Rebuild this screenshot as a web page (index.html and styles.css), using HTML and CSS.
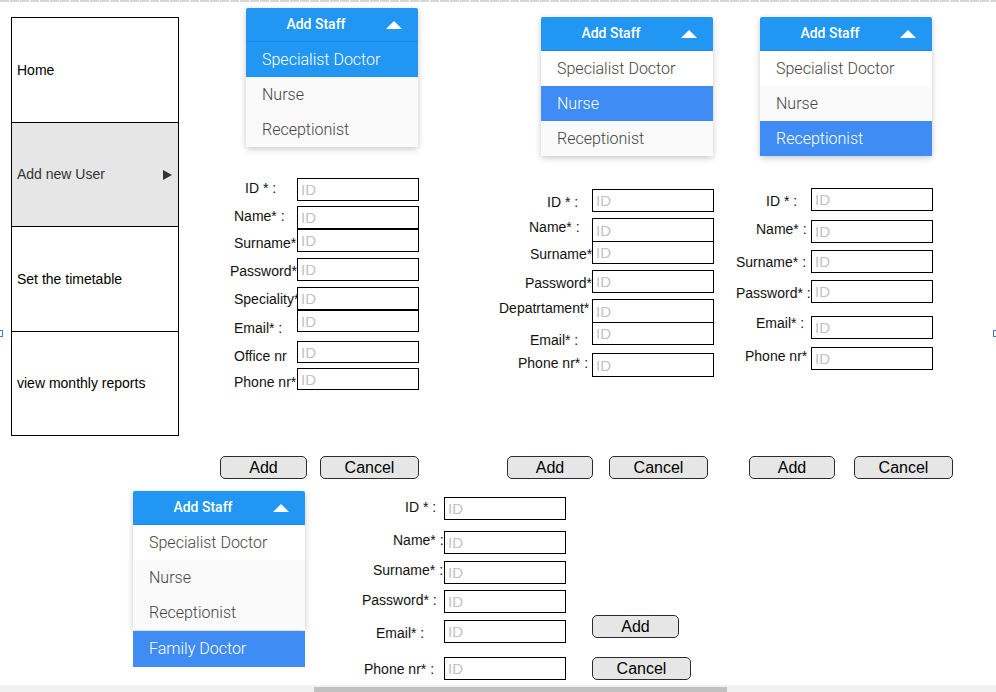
FILE: index.html
```html
<!DOCTYPE html>
<html>
<head>
<meta charset="utf-8">
<link rel="stylesheet" href="styles.css">
</head>
<body>
<div class="canvas">
  <div class="ruler"></div>
  <div class="handle handle-l"></div>
  <div class="handle handle-r"></div>

  <nav class="sidebar">
    <div class="cell">Home</div>
    <div class="cell cell-active"><span>Add new User</span><svg class="arrow" width="9" height="10" viewBox="0 0 9 10"><path d="M0 0 L9 5 L0 10 Z" fill="#333"/></svg></div>
    <div class="cell">Set the timetable</div>
    <div class="cell">view monthly reports</div>
  </nav>

  <!-- Dropdown 1 -->
  <div class="dd dd1">
    <div class="dd-head"><span class="dd-title">Add Staff</span><span class="tri"></span></div>
    <div class="dd-item sel1">Specialist Doctor</div>
    <div class="dd-item alt">Nurse</div>
    <div class="dd-item alt">Receptionist</div>
  </div>

  <!-- Dropdown 2 -->
  <div class="dd dd2">
    <div class="dd-head"><span class="dd-title">Add Staff</span><span class="tri"></span></div>
    <div class="dd-item">Specialist Doctor</div>
    <div class="dd-item sel">Nurse</div>
    <div class="dd-item alt">Receptionist</div>
  </div>

  <!-- Dropdown 3 -->
  <div class="dd dd3">
    <div class="dd-head"><span class="dd-title">Add Staff</span><span class="tri"></span></div>
    <div class="dd-item">Specialist Doctor</div>
    <div class="dd-item alt">Nurse</div>
    <div class="dd-item sel">Receptionist</div>
  </div>

  <!-- Dropdown 4 -->
  <div class="dd dd4">
    <div class="dd-head"><span class="dd-title">Add Staff</span><span class="tri"></span></div>
    <div class="dd-item">Specialist Doctor</div>
    <div class="dd-item alt">Nurse</div>
    <div class="dd-item alt">Receptionist</div>
  </div>
  <div class="dd-extra">Family Doctor</div>

  <!-- Form 1 -->
  <span class="lbl l1a">ID * :</span>
  <span class="lbl l1b">Name* :</span>
  <span class="lbl l1c">Surname*</span>
  <span class="lbl l1d">Password*</span>
  <span class="lbl l1e">Speciality*</span>
  <span class="lbl l1f">Email* :</span>
  <span class="lbl l1g">Office nr</span>
  <span class="lbl l1h">Phone nr*</span>
  <input class="inp i1 i1a" placeholder="ID">
  <input class="inp i1 i1b" placeholder="ID">
  <input class="inp i1 i1c" placeholder="ID">
  <input class="inp i1 i1d" placeholder="ID">
  <input class="inp i1 i1e" placeholder="ID">
  <input class="inp i1 i1f" placeholder="ID">
  <input class="inp i1 i1g" placeholder="ID">
  <input class="inp i1 i1h" placeholder="ID">

  <!-- Form 2 -->
  <span class="lbl l2a">ID * :</span>
  <span class="lbl l2b">Name* :</span>
  <span class="lbl l2c">Surname*</span>
  <span class="lbl l2d">Password*</span>
  <span class="lbl l2e">Depatrtament*</span>
  <span class="lbl l2f">Email* :</span>
  <span class="lbl l2g">Phone nr* :</span>
  <input class="inp i2 i2a" placeholder="ID">
  <input class="inp i2 i2b" placeholder="ID">
  <input class="inp i2 i2c" placeholder="ID">
  <input class="inp i2 i2d" placeholder="ID">
  <input class="inp i2 i2e" placeholder="ID">
  <input class="inp i2 i2f" placeholder="ID">
  <input class="inp i2 i2g" placeholder="ID">

  <!-- Form 3 -->
  <span class="lbl l3a">ID * :</span>
  <span class="lbl l3b">Name* :</span>
  <span class="lbl l3c">Surname* :</span>
  <span class="lbl l3d">Password* :</span>
  <span class="lbl l3e">Email* :</span>
  <span class="lbl l3f">Phone nr* :</span>
  <input class="inp i3 i3a" placeholder="ID">
  <input class="inp i3 i3b" placeholder="ID">
  <input class="inp i3 i3c" placeholder="ID">
  <input class="inp i3 i3d" placeholder="ID">
  <input class="inp i3 i3e" placeholder="ID">
  <input class="inp i3 i3f" placeholder="ID">

  <!-- Form 4 -->
  <span class="lbl l4a">ID * :</span>
  <span class="lbl l4b">Name* :</span>
  <span class="lbl l4c">Surname* :</span>
  <span class="lbl l4d">Password* :</span>
  <span class="lbl l4e">Email* :</span>
  <span class="lbl l4f">Phone nr* :</span>
  <input class="inp i4 i4a" placeholder="ID">
  <input class="inp i4 i4b" placeholder="ID">
  <input class="inp i4 i4c" placeholder="ID">
  <input class="inp i4 i4d" placeholder="ID">
  <input class="inp i4 i4e" placeholder="ID">
  <input class="inp i4 i4f" placeholder="ID">

  <!-- Buttons -->
  <button class="btn b1a">Add</button>
  <button class="btn b1b">Cancel</button>
  <button class="btn b2a">Add</button>
  <button class="btn b2b">Cancel</button>
  <button class="btn b3a">Add</button>
  <button class="btn b3b">Cancel</button>
  <button class="btn b4a">Add</button>
  <button class="btn b4b">Cancel</button>

  <div class="hscroll"><div class="thumb"></div></div>
</div>
</body>
</html>
```

FILE: styles.css
```css
* { box-sizing: border-box; }
html, body { margin: 0; padding: 0; background: #fff; }
body { font-family: "Liberation Sans", Arial, sans-serif; }

.canvas {
  position: relative;
  width: 996px;
  height: 692px;
  overflow: hidden;
  background: #fff;
}

.ruler {
  position: absolute;
  left: 0; top: 0;
  width: 996px;
  height: 2px;
  background: repeating-linear-gradient(90deg, #d6d6d6 0 9px, #ffffff 9px 10px);
}

.handle {
  position: absolute;
  width: 6px;
  height: 7px;
  border: 1px solid #4a78c8;
  background: #fff;
  top: 330px;
}
.handle-l { left: -3px; }
.handle-r { left: 993px; }

/* Sidebar */
.sidebar {
  position: absolute;
  left: 11px; top: 17px;
  width: 168px;
  height: 419px;
  border: 1px solid #000;
  display: flex;
  flex-direction: column;
}
.cell {
  flex: 1;
  display: flex;
  align-items: center;
  justify-content: space-between;
  padding: 0 6px 0 5px;
  font-size: 14px;
  color: #000;
}
.cell + .cell { border-top: 1px solid #000; }
.cell-active { background: #e6e6e6; color: #333; }
.arrow { display: block; margin-top: 1px; }

/* Dropdowns */
.dd {
  position: absolute;
  width: 172px;
  font-family: Roboto, "Noto Sans", sans-serif;
  box-shadow: 0 2px 6px rgba(0,0,0,0.22);
  border-radius: 2px;
  background: #fafafa;
}
.dd1 { left: 246px; top: 8px; }
.dd2 { left: 541px; top: 17px; }
.dd3 { left: 760px; top: 17px; }
.dd4 { left: 133px; top: 491px; }

.dd-head {
  height: 34px;
  background: #2196f3;
  color: #fff;
  display: flex;
  align-items: center;
  padding-right: 16px;
  border-radius: 2px 2px 0 0;
  border-bottom: 1px solid #1e88e5;
}
.dd-title {
  flex: 1;
  text-align: center;
  font-size: 14px;
  font-weight: 500;
  margin-top: -1px;
}
.tri {
  width: 0; height: 0;
  border-left: 8px solid transparent;
  border-right: 8px solid transparent;
  border-bottom: 8px solid #fff;
  margin-top: 1px;
}
.dd-item {
  height: 35px;
  line-height: 35px;
  padding-left: 16px;
  font-size: 16px;
  font-weight: 300;
  color: #444;
  background: #fff;
}
.dd-item.alt { background: #fafafa; }
.dd-item.sel { background: #3f8cf4; color: #fff; }
.dd-item.sel1 { background: #2196f3; color: #fff; }

.dd-extra {
  position: absolute;
  left: 133px; top: 631px;
  width: 172px; height: 36px;
  line-height: 36px;
  padding-left: 16px;
  font-family: Roboto, "Noto Sans", sans-serif;
  font-size: 16px;
  font-weight: 300;
  color: #fff;
  background: #3f8cf4;
}

/* Labels */
.lbl {
  position: absolute;
  font-size: 14px;
  line-height: 16px;
  color: #111;
  white-space: nowrap;
}
.l1a { left: 245px; top: 180px; }
.l1b { left: 234px; top: 208px; }
.l1c { left: 234px; top: 235px; }
.l1d { left: 230px; top: 263px; }
.l1e { left: 234px; top: 291px; }
.l1f { left: 234px; top: 320px; }
.l1g { left: 234px; top: 348px; }
.l1h { left: 234px; top: 374px; }

.l2a { left: 547px; top: 194px; }
.l2b { left: 529px; top: 219px; }
.l2c { left: 530px; top: 246px; }
.l2d { left: 525px; top: 275px; }
.l2e { left: 499px; top: 300px; }
.l2f { left: 530px; top: 332px; }
.l2g { left: 518px; top: 355px; }

.l3a { left: 766px; top: 193px; }
.l3b { left: 756px; top: 221px; }
.l3c { left: 736px; top: 254px; }
.l3d { left: 736px; top: 285px; }
.l3e { left: 756px; top: 315px; }
.l3f { left: 745px; top: 348px; }

.l4a { left: 405px; top: 499px; }
.l4b { left: 393px; top: 532px; }
.l4c { left: 373px; top: 562px; }
.l4d { left: 362px; top: 592px; }
.l4e { left: 376px; top: 625px; }
.l4f { left: 364px; top: 661px; }

/* Inputs */
.inp {
  position: absolute;
  margin: 0;
  height: 23px;
  border: 1px solid #000;
  border-radius: 0;
  background: #fff;
  padding: 0 3px;
  font-family: "Liberation Sans", Arial, sans-serif;
  font-size: 15px;
  color: #000;
  outline: none;
}
.inp::placeholder { color: #c2c2c2; opacity: 1; }
.i1 { left: 297px; width: 122px; }
.i2 { left: 592px; width: 122px; }
.i3 { left: 811px; width: 122px; }
.i4 { left: 444px; width: 122px; }

.i1a { top: 178px; }
.i1b { top: 206px; }
.i1c { top: 229px; }
.i1d { top: 258px; }
.i1e { top: 287px; }
.i1f { top: 310px; height: 22px; }
.i1g { top: 341px; height: 22px; }
.i1h { top: 368px; height: 22px; }

.i2a { top: 189px; }
.i2b { top: 218px; height: 24px; }
.i2c { top: 241px; }
.i2d { top: 270px; }
.i2e { top: 299px; height: 24px; }
.i2f { top: 322px; }
.i2g { top: 353px; height: 24px; }

.i3a { top: 188px; }
.i3b { top: 220px; }
.i3c { top: 250px; }
.i3d { top: 280px; }
.i3e { top: 316px; }
.i3f { top: 347px; }

.i4a { top: 497px; }
.i4b { top: 531px; }
.i4c { top: 561px; }
.i4d { top: 590px; }
.i4e { top: 620px; }
.i4f { top: 657px; }

/* Buttons */
.btn {
  position: absolute;
  margin: 0;
  padding: 0;
  height: 23px;
  border: 1px solid #2b2b2b;
  border-radius: 5px;
  background: #e6e6e6;
  font-family: "Liberation Sans", Arial, sans-serif;
  font-size: 16px;
  color: #000;
  line-height: 21px;
}
.b1a { left: 220px; top: 456px; width: 87px; }
.b1b { left: 320px; top: 456px; width: 99px; }
.b2a { left: 507px; top: 456px; width: 86px; }
.b2b { left: 609px; top: 456px; width: 99px; }
.b3a { left: 749px; top: 456px; width: 86px; }
.b3b { left: 854px; top: 456px; width: 99px; }
.b4a { left: 592px; top: 615px; width: 87px; }
.b4b { left: 592px; top: 657px; width: 99px; }

/* Scrollbar */
.hscroll {
  position: absolute;
  left: 0; top: 685px;
  width: 996px; height: 7px;
  background: #f1f1f1;
}
.thumb {
  position: absolute;
  left: 314px; top: 2px;
  width: 413px; height: 5px;
  background: #c1c1c1;
}
```
